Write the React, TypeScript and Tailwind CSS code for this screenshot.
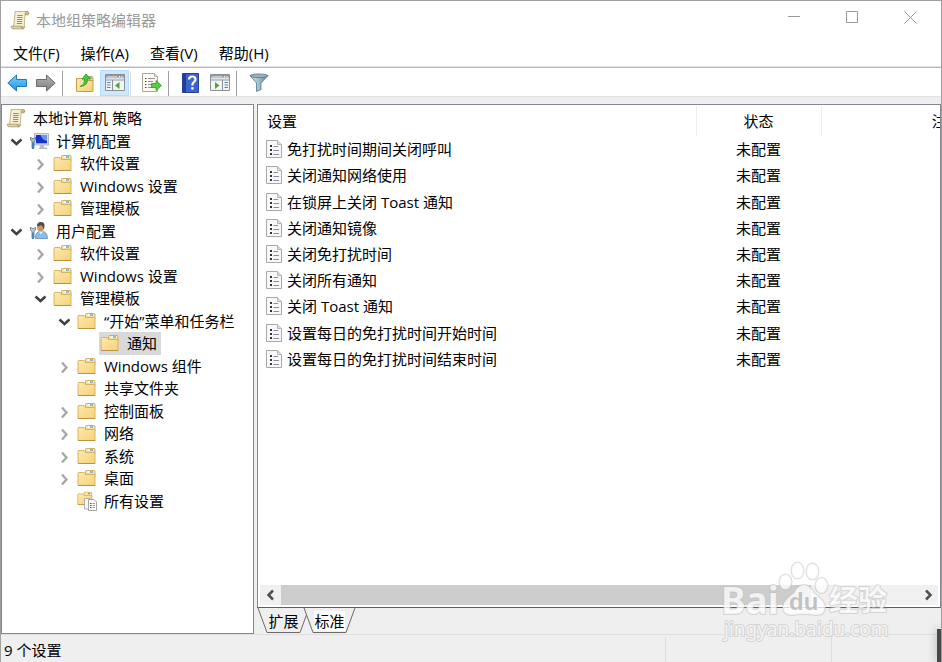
import React, { useState } from 'react';

interface TreeNode {
  id: string;
  label: string;
  level: number;
  icon: 'scroll' | 'computer' | 'user' | 'folder' | 'all';
  state?: 'open' | 'closed';
}

const treeNodes: TreeNode[] = [
  { id: 'root', label: '本地计算机 策略', level: 0, icon: 'scroll' },
  { id: 'computer', label: '计算机配置', level: 1, icon: 'computer', state: 'open' },
  { id: 'c-software', label: '软件设置', level: 2, icon: 'folder', state: 'closed' },
  { id: 'c-windows', label: 'Windows 设置', level: 2, icon: 'folder', state: 'closed' },
  { id: 'c-templates', label: '管理模板', level: 2, icon: 'folder', state: 'closed' },
  { id: 'user', label: '用户配置', level: 1, icon: 'user', state: 'open' },
  { id: 'u-software', label: '软件设置', level: 2, icon: 'folder', state: 'closed' },
  { id: 'u-windows', label: 'Windows 设置', level: 2, icon: 'folder', state: 'closed' },
  { id: 'u-templates', label: '管理模板', level: 2, icon: 'folder', state: 'open' },
  { id: 'start', label: '“开始”菜单和任务栏', level: 3, icon: 'folder', state: 'open' },
  { id: 'notify', label: '通知', level: 4, icon: 'folder' },
  { id: 'components', label: 'Windows 组件', level: 3, icon: 'folder', state: 'closed' },
  { id: 'shared', label: '共享文件夹', level: 3, icon: 'folder' },
  { id: 'control', label: '控制面板', level: 3, icon: 'folder', state: 'closed' },
  { id: 'network', label: '网络', level: 3, icon: 'folder', state: 'closed' },
  { id: 'system', label: '系统', level: 3, icon: 'folder', state: 'closed' },
  { id: 'desktop', label: '桌面', level: 3, icon: 'folder', state: 'closed' },
  { id: 'all', label: '所有设置', level: 3, icon: 'all' },
];

const settings = [
  '免打扰时间期间关闭呼叫',
  '关闭通知网络使用',
  '在锁屏上关闭 Toast 通知',
  '关闭通知镜像',
  '关闭免打扰时间',
  '关闭所有通知',
  '关闭 Toast 通知',
  '设置每日的免打扰时间开始时间',
  '设置每日的免打扰时间结束时间',
];

const menus = ['文件(F)', '操作(A)', '查看(V)', '帮助(H)'];

const indents = ['pl-0', 'pl-0', 'pl-6', 'pl-12', 'pl-18'];

const ScrollIcon = () => (
  <svg width="20" height="20" viewBox="0 0 20 20" aria-hidden="true">
    <path d="M5 1.500h12.500c1.500 0 1.800 2.800.3 3.200H15l-.8 12.800H3.500L5 3z" fill="#f7efd2" stroke="#b5a67a" strokeWidth="0.800" />
    <path d="M15 4.700c-.3-2 .6-3.200 2.300-3.200 1.600 0 2 2.900.4 3.200z" fill="#cdb987" stroke="#a39468" strokeWidth="0.600" />
    <path d="M1.300 16.200h10.200c-.2 1.400.4 2.600 1.800 2.600H3c-1.500 0-2-1.400-1.700-2.600z" fill="#e4d3a0" stroke="#a39468" strokeWidth="0.800" />
    <path d="M11.500 16.200c0 3 3 3.300 3.200.3" fill="#c2b080" stroke="#a39468" strokeWidth="0.600" />
    <path d="M7.200 5.500h5.500M7.200 7.500h5.300M7 9.500h5.300M7 11.500h5.300M6.800 13.500h5.300" stroke="#8e8b83" />
  </svg>
);

const FolderShape = () => (
  <>
    <path d="M8.500 5V2.500q0-1 1-1h7.500q1 0 1 1V7h-9.500z" fill="#f3dc96" stroke="#cfa955" strokeWidth="0.900" />
    <path d="M10.500 3h6" stroke="#fff" strokeWidth="1.600" />
    <path d="M13 3h3" stroke="#4b9fe0" strokeWidth="1.400" />
    <path d="M1.500 3.500h5.500l1.500 2h9q.5 0 .5.500v10q0 .5-.5.500h-16q-.5 0-.5-.5V4z" fill="url(#folderFill)" stroke="#d2ae5c" strokeWidth="0.900" />
    <path d="M1 16.500h17.300" stroke="#b99243" />
  </>
);

const FolderIcon = () => (
  <svg width="20" height="18" viewBox="0 0 20 18" aria-hidden="true">
    <FolderShape />
  </svg>
);

const ComputerIcon = () => (
  <svg width="20" height="20" viewBox="0 0 20 20" aria-hidden="true">
    <path d="M5.500 2.500h14V14h-14z" fill="#d9dcdf" stroke="#a3a8ad" strokeWidth="0.800" />
    <path d="M7 4h11v8.300H7z" fill="#1631c8" />
    <path d="M11.500 4H18v6q-5-1-6.500-6z" fill="#6c95f2" />
    <path d="M11 14h4v2.500h3V18h-8v-1.500h1z" fill="#b9bdc0" />
    <path d="M1.500 6v3L3 10.200V17q1 1.400 2 0v-6.800L6.500 9V6L5 7.500H3z" fill="#a5bed5" stroke="#5d7489" strokeWidth="0.800" />
    <path d="M3 11.500h2V18H3z" fill="#3f7cc0" />
  </svg>
);

const UserIcon = () => (
  <svg width="20" height="20" viewBox="0 0 20 20" aria-hidden="true">
    <path d="M6.500 17.500q-.5-7 5.500-7.500 6.500.5 6.500 7.500z" fill="#8dbbe6" stroke="#5c8dbd" strokeWidth="0.800" />
    <path d="M9.500 10.200l2.500 3.300 2-3.300z" fill="#e9f2fa" />
    <ellipse cx="11.500" cy="6" rx="3.500" ry="4.500" fill="#c99468" />
    <path d="M8 5q0-4 4-4t3.500 5l-1 2.500q0-3-2.500-4.500-1 1.500-4 1z" fill="#5b4a40" />
    <path d="M1.500 6v3L3 10.200V17q1 1.400 2 0v-6.800L6.500 9V6L5 7.500H3z" fill="#c2d0dc" stroke="#5d7489" strokeWidth="0.800" />
    <path d="M3 11.500h2V18H3z" fill="#4a86c4" />
  </svg>
);

const AllSettingsIcon = () => (
  <svg width="20" height="20" viewBox="0 0 20 20" aria-hidden="true">
    <g transform="scale(.82)">
      <FolderShape />
    </g>
    <path d="M7.500 7.500h6l2 2V18h-8z" fill="#f7f7f7" stroke="#a2a2a2" strokeWidth="0.800" />
    <path d="M11.500 8.500h5.500l2.500 2.500v8.500h-8z" fill="#fff" stroke="#9a9a9a" strokeWidth="0.900" />
    <path d="M13 12.500h1.500M13 14.500h1.500M13 16.500h1.500" stroke="#444" />
    <path d="M15.500 12.500h2.500M15.500 14.500h2.500M15.500 16.500h2.500" stroke="#9a9ab0" />
  </svg>
);

const SettingIcon = () => (
  <svg width="16" height="18" viewBox="0 0 16 18" aria-hidden="true">
    <path d="M.5.500h11l4 4v13H.5z" fill="#f8f8f8" stroke="#a8a8a8" />
    <path d="M11.500.500v4h4" fill="#dedede" stroke="#b5b5b5" />
    <path d="M4 5h2v2H4zM4 9h2v2H4zM4 13h2v2H4z" fill="#333" />
    <path d="M7.500 6.500H12M7.500 10.500H13M7.500 14.500H13" stroke="#8a8aa5" />
  </svg>
);

const nodeIcons = {
  scroll: ScrollIcon,
  computer: ComputerIcon,
  user: UserIcon,
  folder: FolderIcon,
  all: AllSettingsIcon,
};

const Chevron = ({ open }: { open: boolean }) =>
  open ? (
    <svg width="12" height="12" viewBox="0 0 12 12" fill="none" aria-hidden="true">
      <path d="M1.500 3.500L6.500 8l5-4.500" stroke="#404040" strokeWidth="2.500" />
    </svg>
  ) : (
    <svg width="12" height="12" viewBox="0 0 12 12" fill="none" aria-hidden="true">
      <path d="M4 1.500l4.500 5L4 11.500" stroke="#a6a6a6" strokeWidth="2.300" />
    </svg>
  );

const BackIcon = () => (
  <svg width="20" height="18" viewBox="0 0 20 18" aria-hidden="true">
    <path d="M.8 9L9.500 1v4.500h10v7h-10V17z" fill="url(#blueFill)" stroke="#2378b5" strokeLinejoin="round" />
  </svg>
);

const ForwardIcon = () => (
  <svg width="20" height="18" viewBox="0 0 20 18" aria-hidden="true">
    <path d="M19.200 9L10.500 1v4.500H.5v7h10V17z" fill="url(#greyFill)" stroke="#6b6b6b" strokeLinejoin="round" />
  </svg>
);

const FolderUpIcon = () => (
  <svg width="20" height="20" viewBox="0 0 20 20" aria-hidden="true">
    <path d="M10.500 7V4.500q0-1 1-1H17q1 0 1 1V8z" fill="#f3dc96" stroke="#cfa955" />
    <path d="M14 5h3" stroke="#4b9fe0" strokeWidth="1.200" />
    <path d="M1.500 5.500h5.500l1.500 2H18V18.500H1.500z" fill="url(#folderFill)" stroke="#c5a04c" />
    <path d="M5 13.500q5-1.500 4.500-7.500H7L11 1l4.500 5h-3Q13 13 5 13.500z" fill="#48c83c" stroke="#2b9427" strokeWidth="0.800" />
  </svg>
);

// flip puts the narrow pane on the right-hand side
const PaneIcon = ({ flip = false }: { flip?: boolean }) => (
  <svg width="20" height="18" viewBox="0 0 20 18" aria-hidden="true">
    <path d="M.5.500h19v16H.5z" fill="#f4f4f4" stroke="#8a8f94" />
    <path d="M1 1h18v2.500H1z" fill="#8f979e" />
    <path d="M1 4.500h18" stroke="#dfe2e5" />
    <path d="M1 6h18" stroke="#8f979e" />
    <path d="M2 2.500h10" stroke="#c3c9ce" />
    <path d="M14 2.500h1M16.500 2.500h1" stroke="#fff" />
    {flip ? (
      <>
        <path d="M12.500 6v10.500" stroke="#8a8f94" />
        <path d="M14.500 8.500h3.500M14.500 11h3.500M14.500 13.500h3.500" stroke="#4d86bb" strokeWidth="1.200" />
        <path d="M5 8v7l4.500-3.500z" fill="#3fae35" />
      </>
    ) : (
      <>
        <path d="M7.500 6v10.500" stroke="#8a8f94" />
        <path d="M2 8.500h3.500M2 11h3.500M2 13.500h3.500" stroke="#4d86bb" strokeWidth="1.200" />
        <path d="M14.500 8v7L10 11.500z" fill="#3fae35" />
      </>
    )}
  </svg>
);

const ExportIcon = () => (
  <svg width="20" height="20" viewBox="0 0 20 20" aria-hidden="true">
    <path d="M.5.500h12l3 3v15H.5z" fill="#fdfbf0" stroke="#aaa698" />
    <path d="M12.500.500v3h3" fill="#e3dfd0" stroke="#aaa698" strokeWidth="0.800" />
    <path d="M3 5.500h1.500M3 8.500h1.500M3 11.500h1.500M3 14.500h1.500" stroke="#444" strokeWidth="1.200" />
    <path d="M6 5.500h7M6 8.500h5M6 11.500h4M6 14.500h5" stroke="#8f8fa0" strokeWidth="1.200" />
    <path d="M9.500 10.500h4.500V7.500l5.500 5-5.500 5v-3H9.500z" fill="#58cc3f" stroke="#37982a" strokeWidth="0.800" />
  </svg>
);

const HelpIcon = () => (
  <svg width="18" height="20" viewBox="0 0 18 20" aria-hidden="true">
    <path d="M.5.500h16v19H.5z" fill="#3c63cf" stroke="#24408f" />
    <path d="M1 1h3v18H1z" fill="#1f3f9f" />
    <path d="M7 6.500q.2-3 3.300-3t3.200 2.800q0 1.700-1.600 2.700T10.300 12.500" fill="none" stroke="#fff" strokeWidth="2.200" />
    <path d="M9.200 14.200h2.400v2.300H9.200z" fill="#fff" />
  </svg>
);

const FilterIcon = () => (
  <svg width="20" height="20" viewBox="0 0 20 20" aria-hidden="true">
    <path d="M1 2.500l6.500 7.500v8.500l4.500-2V10l7-7.500z" fill="url(#funnelFill)" stroke="#66808f" strokeWidth="0.900" />
    <ellipse cx="10" cy="2.800" rx="9" ry="1.800" fill="#9fb0bb" stroke="#62798a" strokeWidth="0.900" />
  </svg>
);

const SharedGradients = () => (
  <svg width="0" height="0" className="absolute" aria-hidden="true">
    <defs>
      <linearGradient id="folderFill" x1="0" y1="0" x2="1" y2="1">
        <stop offset="0" stopColor="#fde9ab" />
        <stop offset="1" stopColor="#f5d27c" />
      </linearGradient>
      <linearGradient id="blueFill" x1="0" y1="0" x2="0" y2="1">
        <stop offset="0" stopColor="#7fd0fb" />
        <stop offset="1" stopColor="#1895e4" />
      </linearGradient>
      <linearGradient id="greyFill" x1="0" y1="0" x2="0" y2="1">
        <stop offset="0" stopColor="#b5b5b5" />
        <stop offset="1" stopColor="#7d7d7d" />
      </linearGradient>
      <linearGradient id="funnelFill" x1="0" y1="0" x2="1" y2="0">
        <stop offset="0" stopColor="#d5e5ef" />
        <stop offset="0.500" stopColor="#9dbdd0" />
        <stop offset="1" stopColor="#587a90" />
      </linearGradient>
    </defs>
  </svg>
);

const ToolSeparator = () => <div className="h-[25px] w-px bg-[#a0a0a0]" />;

const TitleBar = () => (
  <header className="flex h-[37px] items-center pr-[2px] pl-[9px]">
    <ScrollIcon />
    <h1 className="ml-[6px] text-[#999]">本地组策略编辑器</h1>
    <div className="ml-auto flex self-start">
      <button aria-label="最小化" className="flex h-8 w-[58px] items-center justify-center">
        <svg width="13" height="13" viewBox="0 0 13 13"><path d="M0 5.500h12" stroke="#999" /></svg>
      </button>
      <button aria-label="最大化" className="flex h-8 w-[58px] items-center justify-center">
        <svg width="13" height="13" viewBox="0 0 13 13"><path d="M.5.500h11v11H.5z" fill="none" stroke="#999" /></svg>
      </button>
      <button aria-label="关闭" className="flex h-8 w-[58px] items-center justify-center">
        <svg width="13" height="13" viewBox="0 0 13 13"><path d="M.5.500l12 12M12.500.500l-12 12" stroke="#999" /></svg>
      </button>
    </div>
  </header>
);

const Toolbar = () => (
  <div role="toolbar" className="flex h-[30px] items-center border-y border-t-[#b4bac2] border-b-[#e2e2e2] pt-[2px] pl-[6px]">
    <button aria-label="后退"><BackIcon /></button>
    <button aria-label="前进" className="mr-[6px] ml-[9px]"><ForwardIcon /></button>
    <ToolSeparator />
    <button aria-label="上一级" className="mr-[5px] ml-3"><FolderUpIcon /></button>
    <button aria-label="显示/隐藏控制台树" aria-pressed="true" className="flex h-[26px] w-[29px] items-center justify-center border border-[#b5dcfb] bg-[#cce8ff]">
      <PaneIcon />
    </button>
    <div className="ml-px h-[25px] w-px bg-[#dcdcdc]" />
    <button aria-label="导出列表" className="mr-[6px] ml-[11px]"><ExportIcon /></button>
    <ToolSeparator />
    <button aria-label="帮助" className="ml-[13px]"><HelpIcon /></button>
    <button aria-label="显示/隐藏操作窗格" className="mr-[6px] ml-[10px]"><PaneIcon flip /></button>
    <ToolSeparator />
    <button aria-label="筛选器" className="ml-3"><FilterIcon /></button>
  </div>
);

interface TreeRowProps {
  node: TreeNode;
  selected: boolean;
  onSelect: (id: string) => void;
}

const TreeRow = ({ node, selected, onSelect }: TreeRowProps) => {
  const Icon = nodeIcons[node.icon];

  return (
    <li className={`flex items-stretch ${indents[node.level]}`}>
      {node.level > 0 && (
        <div className="flex w-[26px] items-center pt-[2px] pl-2">
          {node.state && (
            <button aria-label={node.state === 'open' ? '折叠' : '展开'}>
              <Chevron open={node.state === 'open'} />
            </button>
          )}
        </div>
      )}
      <button
        onClick={() => onSelect(node.id)}
        className={`flex items-center gap-[7px] pr-1 pl-px leading-[22px] whitespace-nowrap ${node.level === 0 ? 'ml-[3px]' : ''} ${node.level === 4 ? '-ml-px pl-[2px]' : ''} ${selected ? 'bg-[#d9d9d9]' : ''}`}
      >
        <Icon />
        <span>{node.label}</span>
      </button>
    </li>
  );
};

const SettingsTable = () => (
  <div className="min-h-0 flex-1 overflow-hidden pt-px pr-[2px]">
    <table className="h-[266px] w-[814px] table-fixed border-collapse">
      <thead>
        <tr className="h-[30px]">
          <th className="w-[438px] border-r border-[#ececec] p-0 pl-[9px] text-left font-normal">设置</th>
          <th className="w-[125px] border-r border-[#ececec] p-0 font-normal">状态</th>
          <th className="p-0 font-normal">注释</th>
        </tr>
      </thead>
      <tbody>
        {settings.map(name => (
          <tr key={name}>
            <td className="p-0 pl-2">
              <div className="flex items-center gap-[5px] leading-[22px]">
                <SettingIcon />
                {name}
              </div>
            </td>
            <td className="p-0 text-center leading-[22px]">未配置</td>
            <td className="p-0" />
          </tr>
        ))}
      </tbody>
    </table>
  </div>
);

const HorizontalScrollbar = () => (
  <div className="mx-[2px] mb-[2px] flex h-5 bg-[#f0f0f0]">
    <button aria-label="向左滚动" className="flex w-[21px] items-center justify-center">
      <svg width="12" height="12" viewBox="0 0 12 12"><path d="M8 1.500L3.500 6 8 10.500" fill="none" stroke="#505050" strokeWidth="2.500" /></svg>
    </button>
    <div className="flex-1">
      <div className="h-full w-5/6 bg-[#cdcdcd]" />
    </div>
    <button aria-label="向右滚动" className="flex w-[21px] items-center justify-center">
      <svg width="12" height="12" viewBox="0 0 12 12"><path d="M4 1.500L8.500 6 4 10.500" fill="none" stroke="#505050" strokeWidth="2.500" /></svg>
    </button>
  </div>
);

const ViewTab = ({ label, active = false }: { label: string; active?: boolean }) => (
  <button role="tab" aria-selected={active} className="relative -mr-[7px] flex h-[25px] w-[53px] items-center justify-center leading-5">
    <svg className="absolute inset-0 h-full w-full" viewBox="0 0 53 25" aria-hidden="true">
      <path d="M1 0L10 24.500H43L52 0" fill="#efefef" stroke="#6a6a6a" />
    </svg>
    <span className={active ? 'relative bg-white' : 'relative'}>{label}</span>
  </button>
);

const Watermark = () => (
  <svg
    className="pointer-events-none absolute right-[50px] bottom-[14px]"
    width="172"
    height="88"
    viewBox="0 0 172 88"
    fill="#fff"
    fillOpacity="0.750"
    stroke="#bdbdbd"
    strokeOpacity="0.550"
    strokeWidth="2"
    strokeLinejoin="round"
    paintOrder="stroke"
    aria-hidden="true"
  >
    <ellipse cx="66.500" cy="22" rx="6" ry="7.500" />
    <ellipse cx="78.500" cy="10.500" rx="6" ry="8" />
    <ellipse cx="93.500" cy="11.500" rx="6" ry="8" />
    <ellipse cx="102.500" cy="25.500" rx="6" ry="7.500" />
    <path d="M85 25q6 0 10 8 11 8 11 14 0 8-9 8-6-1-12-1t-12 1q-9 0-9-8 0-6 11-14 4-8 10-8z" />
    <text x="2" y="54" className="font-['Noto_Sans'] text-[37px] font-bold">Bai</text>
    <text x="70" y="50" fill="#b0b0b0" stroke="#fff" className="font-['Liberation_Sans'] text-[24px] font-bold">du</text>
    <text x="110" y="51" className="font-['Noto_Sans_CJK_SC'] text-[29px] font-bold">经验</text>
    <text x="5" y="76" className="font-['Noto_Sans'] text-[19px]">jingyan.baidu.com</text>
  </svg>
);

export default function App() {
  const [selectedId, setSelectedId] = useState('notify');

  return (
    <div className="relative flex min-h-screen flex-col overflow-hidden border-x border-t border-[#a0a0a0] bg-[#efefef] font-['Open_Sans','Noto_Sans_CJK_SC',sans-serif] text-[15px] leading-[22px] text-black">
      <SharedGradients />
      <div className="bg-white">
        <TitleBar />
        <nav className="flex h-[29px] items-center gap-[21px] border-b border-[#dfe1e4] pt-px pl-3">
          {menus.map(menu => (
            <button key={menu}>{menu}</button>
          ))}
        </nav>
        <Toolbar />
      </div>

      <main className="flex flex-1 gap-[3px] pt-[7px]">
        <aside className="w-[253px] shrink-0 border border-[#828790] bg-white pt-[2px]">
          <ul className="grid h-[405px] auto-rows-fr">
            {treeNodes.map(node => (
              <TreeRow
                key={node.id}
                node={node}
                selected={node.id === selectedId}
                onSelect={setSelectedId}
              />
            ))}
          </ul>
        </aside>

        <section className="flex min-w-0 flex-1 flex-col">
          <div className="flex min-h-0 flex-1 flex-col border border-[#828790] border-b-[#5c5f6b] bg-white">
            <SettingsTable />
            <HorizontalScrollbar />
          </div>
          <div role="tablist" className="flex pb-px">
            <ViewTab label="扩展" />
            <ViewTab label="标准" active />
          </div>
        </section>
      </main>

      <footer className="flex h-7 border-t border-[#dedede] pl-[3px]">
        <p className="flex-1 pt-1">9 个设置</p>
        <div className="mt-[2px] w-[166px] border-l border-[#dcdcdc]" />
        <div className="mt-[2px] w-[110px] border-l border-[#dcdcdc]" />
      </footer>

      <Watermark />
      <div className="absolute right-0 bottom-0 h-[33px] w-1 bg-[#484848] shadow-[0_0_10px_rgba(0,0,0,0.35)]" />
    </div>
  );
}
